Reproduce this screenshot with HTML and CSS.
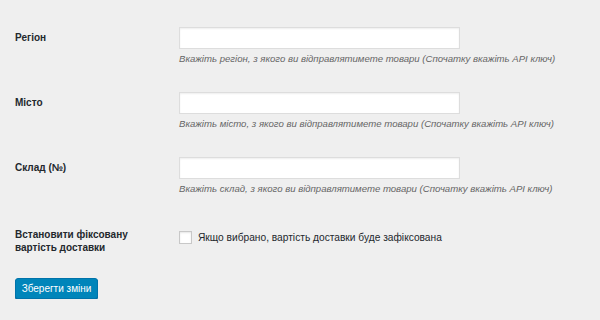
FILE: index.html
```html
<!DOCTYPE html>
<html lang="uk">
<head>
<meta charset="UTF-8">
<title>Налаштування доставки</title>
<link rel="stylesheet" href="styles.css">
</head>
<body>
<form class="settings">
  <div class="form-table">
    <div class="row">
      <label class="th" for="region">Регіон</label>
      <div class="td">
        <input type="text" id="region" class="regular-text">
        <p class="description">Вкажіть регіон, з якого ви відправлятимете товари (Спочатку вкажіть API ключ)</p>
      </div>
    </div>
    <div class="row">
      <label class="th" for="city">Місто</label>
      <div class="td">
        <input type="text" id="city" class="regular-text">
        <p class="description">Вкажіть місто, з якого ви відправлятимете товари (Спочатку вкажіть API ключ)</p>
      </div>
    </div>
    <div class="row">
      <label class="th" for="warehouse">Склад (№)</label>
      <div class="td">
        <input type="text" id="warehouse" class="regular-text">
        <p class="description">Вкажіть склад, з якого ви відправлятимете товари (Спочатку вкажіть API ключ)</p>
      </div>
    </div>
    <div class="row row-check">
      <label class="th th-multi" for="fixed">Встановити фіксовану вартість доставки</label>
      <div class="td">
        <label class="check"><span class="box"></span>Якщо вибрано, вартість доставки буде зафіксована</label>
      </div>
    </div>
  </div>
  <p class="submit"><button type="button" class="button-primary">Зберегти зміни</button></p>
</form>
</body>
</html>
```

FILE: styles.css
```css
html {
	background: #efefef;
}
body {
	margin: 0;
	padding: 0 15px;
	font-family: "Liberation Sans", Arial, sans-serif;
	font-size: 10px;
	color: #23282d;
}
.form-table {
	padding-top: 27px;
}
.row {
	display: grid;
	grid-template-columns: 164px 1fr;
	margin-bottom: 26px;
}
.row-check {
	margin-top: 32px;
	margin-bottom: 24px;
}
.th {
	font-weight: bold;
	line-height: 22px;
}
.th-multi {
	line-height: 13px;
	width: 150px;
}
.regular-text {
	display: block;
	box-sizing: border-box;
	width: 281px;
	height: 22px;
	margin: 0;
	border: 1px solid #ddd;
	background: #fff;
	box-shadow: inset 0 1px 2px rgba(0, 0, 0, .07);
	outline: none;
}
.description {
	margin: 3px 0 0;
	font-size: 9.6px;
	font-style: italic;
	color: #666;
	line-height: 14px;
	white-space: nowrap;
}
.check {
	display: flex;
	align-items: center;
	margin-top: 3px;
	height: 13px;
	line-height: 13px;
	font-size: 10.2px;
}
.box {
	width: 11px;
	height: 11px;
	margin-right: 6px;
	border: 1px solid #c8c8c8;
	background: #fff;
	box-shadow: inset 0 1px 2px rgba(0, 0, 0, .1);
}
.submit {
	margin: 0;
}
.button-primary {
	display: block;
	width: 83px;
	height: 21px;
	padding: 0;
	border: 1px solid #0073aa;
	border-radius: 3px;
	background: #0085ba;
	box-shadow: 0 1px 0 #006799;
	color: #fff;
	font-family: "Liberation Sans", Arial, sans-serif;
	font-size: 10px;
}
```
